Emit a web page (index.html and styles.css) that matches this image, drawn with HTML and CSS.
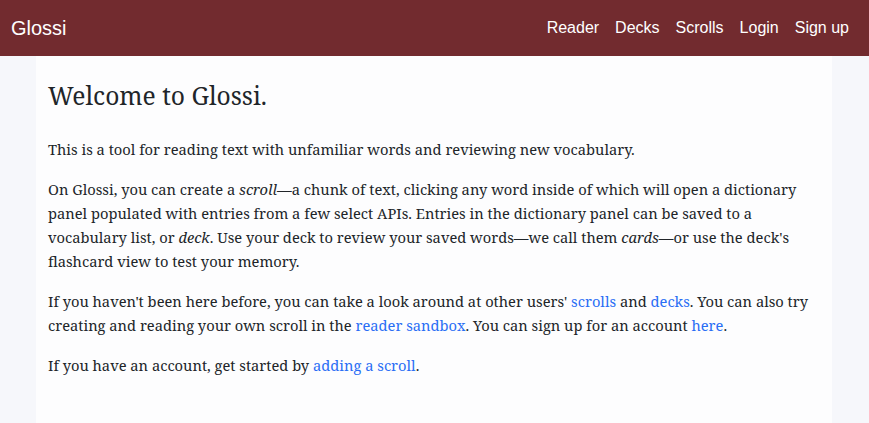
FILE: index.html
```html
<!DOCTYPE html>
<html lang="en">
<head>
<meta charset="utf-8">
<title>Glossi</title>
<link rel="stylesheet" href="styles.css">
</head>
<body>
<nav class="navbar">
  <a class="brand" href="#">Glossi</a>
  <ul class="nav-links">
    <li><a href="#">Reader</a></li>
    <li><a href="#">Decks</a></li>
    <li><a href="#">Scrolls</a></li>
    <li><a href="#">Login</a></li>
    <li><a href="#">Sign up</a></li>
  </ul>
</nav>
<main class="page">
  <section class="panel">
    <h3 class="title">Welcome to Glossi.</h3>
    <p>This is a tool for reading text with unfamiliar words and reviewing new vocabulary.</p>
    <p>On Glossi, you can create a <em>scroll</em>—a chunk of text, clicking any word inside of which will open a dictionary panel populated with entries from a few select APIs. Entries in the dictionary panel can be saved to a vocabulary list, or <em>deck</em>. Use your deck to review your saved words—we call them <em>cards</em>—or use the deck's flashcard view to test your memory.</p>
    <p>If you haven't been here before, you can take a look around at other users' <a href="#">scrolls</a> and <a href="#">decks</a>. You can also try creating and reading your own scroll in the <a href="#">reader sandbox</a>. You can sign up for an account <a href="#">here</a>.</p>
    <p>If you have an account, get started by <a href="#">adding a scroll</a>.</p>
  </section>
</main>
</body>
</html>
```
FILE: styles.css
```css
html, body {
  margin: 0;
  padding: 0;
  height: 100%;
}
body {
  background: #f6f7fb;
  color: #212529;
  font-family: "Noto Serif", "Liberation Serif", serif;
  display: flex;
  flex-direction: column;
  overflow: hidden;
}
.navbar {
  background: #722b2f;
  height: 56px;
  flex: none;
  display: flex;
  align-items: center;
  justify-content: space-between;
  padding: 0 12px 0 11px;
  font-family: "Liberation Sans", Arial, sans-serif;
}
.brand {
  color: #fff;
  text-decoration: none;
  font-size: 20px;
}
.nav-links {
  list-style: none;
  margin: 0;
  padding: 0;
  display: flex;
}
.nav-links a {
  display: block;
  padding: 8px;
  color: #fff;
  text-decoration: none;
  font-size: 16px;
}
.page {
  flex: 1;
  display: flex;
  padding-left: 36px;
}
.panel {
  width: 796px;
  box-sizing: border-box;
  background: #fdfdfe;
  padding: 24px 12px;
}
.title {
  margin: 0 0 26px;
  font-size: 24.6px;
  font-weight: 400;
  line-height: 31px;
}
p {
  margin: 0 0 16px;
  font-size: 14.7px;
  line-height: 24px;
}
a { color: #2a6ef5; text-decoration: none; }
```
